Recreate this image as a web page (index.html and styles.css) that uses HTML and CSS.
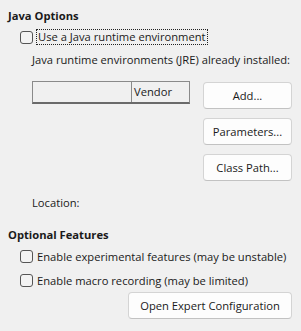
FILE: index.html
```html
<!DOCTYPE html>
<html>
<head>
<meta charset="utf-8">
<link rel="stylesheet" href="styles.css">
</head>
<body>
<div class="page">
  <div class="title first">Java Options</div>
  <label class="check-row">
    <span class="box"></span>
    <span class="focus">Use a Java runtime environment</span>
  </label>
  <div class="jre-label">Java runtime environments (JRE) already installed:</div>
  <div class="jre-area">
    <div class="jre-left">
      <div class="table">
        <div class="col-empty"></div>
        <div class="col-vendor">Vendor</div>
      </div>
    </div>
    <div class="buttons">
      <button class="btn">Add...</button>
      <button class="btn">Parameters...</button>
      <button class="btn">Class Path...</button>
    </div>
  </div>
  <div class="location">Location:</div>
  <div class="title second">Optional Features</div>
  <label class="check-row opt1">
    <span class="box"></span>
    <span>Enable experimental features (may be unstable)</span>
  </label>
  <label class="check-row opt2">
    <span class="box"></span>
    <span>Enable macro recording (may be limited)</span>
  </label>
  <div class="expert-row">
    <button class="btn expert">Open Expert Configuration</button>
  </div>
</div>
</body>
</html>
```
FILE: styles.css
```css
html, body {
  margin: 0;
  padding: 0;
  background: #f0f0f0;
}
body {
  font-family: "Open Sans", "Noto Sans", sans-serif;
  font-size: 11.2px;
  color: #1a1a1a;
  width: 301px;
  height: 331px;
  overflow: hidden;
  white-space: nowrap;
}
.page {
  display: flex;
  flex-direction: column;
  padding-left: 8px;
}
.title {
  font-weight: 700;
  height: 16px;
  line-height: 16px;
}
.title.first { margin-top: 8px; }
.title.second { margin-top: 16px; }
.check-row {
  display: flex;
  align-items: center;
  margin-left: 12px;
  height: 16px;
  gap: 4px;
}
.first + .check-row { margin-top: 5px; }
.box {
  width: 11px;
  height: 11px;
  border: 1px solid #555;
  border-radius: 3px;
  background: #f3f3f3;
  flex: none;
}
.focus {
  outline: 1px dotted #222;
  outline-offset: 0;
  padding: 0 1px;
  line-height: 14px;
}
.jre-label {
  margin-left: 24px;
  margin-top: 7px;
  height: 16px;
  line-height: 16px;
}
.jre-area {
  display: flex;
  margin-left: 24px;
  margin-top: 13px;
  gap: 13px;
}
.jre-left { width: 158px; }
.table {
  display: flex;
  height: 20px;
  border: 1px solid #8a8a8a;
  border-bottom: 2px solid #6a6a6a;
  background: #f0f0f0;
}
.col-empty {
  width: 98px;
  border-right: 1px solid #8a8a8a;
}
.col-vendor {
  padding-left: 2px;
  line-height: 19px;
}
.buttons {
  display: flex;
  flex-direction: column;
  gap: 9px;
  margin-top: 1px;
}
.btn {
  font: inherit;
  color: #1a1a1a;
  background: #fdfdfd;
  border: 1px solid #d4d4d4;
  border-bottom-color: #c2c2c2;
  border-radius: 4px;
  width: 89px;
  height: 27px;
  padding: 0;
}
.location {
  margin-left: 24px;
  margin-top: 14px;
  height: 16px;
  line-height: 16px;
}
.opt1 { margin-top: 5px; }
.opt2 { margin-top: 8px; }
.expert-row {
  display: flex;
  justify-content: flex-end;
  padding-right: 9px;
  margin-top: 4px;
}
.btn.expert {
  width: 164px;
  height: 27px;
}
```
